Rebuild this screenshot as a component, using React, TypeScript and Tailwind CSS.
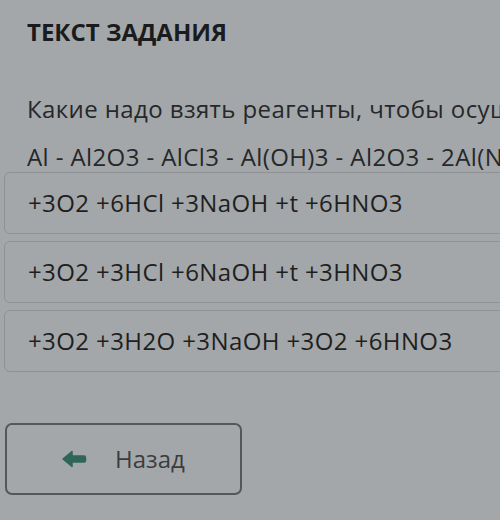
import React from "react";

const options = [
  "+3O2 +6HCl +3NaOH +t +6HNO3",
  "+3O2 +3HCl +6NaOH +t +3HNO3",
  "+3O2 +3H2O +3NaOH +3O2 +6HNO3",
];

function ArrowLeft() {
  return (
    <svg width="26" height="20" viewBox="0 0 26 20" aria-hidden="true">
      <path
        d="M2 10 L11 2.5 L11 7 L23 7 Q24.5 7 24.5 8.5 L24.5 11.5 Q24.5 13 23 13 L11 13 L11 17.5 Z"
        fill="#2f6657"
        stroke="#2f6657"
        strokeWidth="1.5"
        strokeLinejoin="round"
      />
    </svg>
  );
}

export default function App() {
  return (
    <div
      className="w-[500px] h-[520px] overflow-hidden bg-[#a4a7a9] text-[#1f2022]"
      style={{ fontFamily: '"Open Sans", "Noto Sans", sans-serif' }}
    >
      <div className="pl-[27px] pt-[17px]">
        <h1 className="text-[24px] font-bold leading-[30px] text-[#1a1b1d]">ТЕКСТ ЗАДАНИЯ</h1>
      </div>

      <div className="pl-[27px] pt-[38px] whitespace-nowrap text-[24px] leading-[48px] tracking-[0.4px] text-[#26282a]">
        <p>Какие надо взять реагенты, чтобы осуществить превращения?</p>
        <p>Al - Al2O3 - AlCl3 - Al(OH)3 - Al2O3 - 2Al(NO3)3</p>
      </div>

      <div className="flex flex-col gap-[7px] pl-[4px] -mr-[20px] mt-[-9px]">
        {options.map((o) => (
          <div
            key={o}
            className="h-[62px] flex items-center pl-[23px] rounded-[6px] border border-[#8f9294] whitespace-nowrap text-[24px] tracking-[0.4px] text-[#1e1f21]"
          >
            {o}
          </div>
        ))}
      </div>

      <div className="pl-[5px] pt-[51px]">
        <button className="w-[237px] h-[72px] flex items-center rounded-[7px] border-2 border-[#55585a] pl-[54px] gap-[28px]">
          <ArrowLeft />
          <span className="text-[24px] text-[#3a3d3f]">Назад</span>
        </button>
      </div>
    </div>
  );
}
